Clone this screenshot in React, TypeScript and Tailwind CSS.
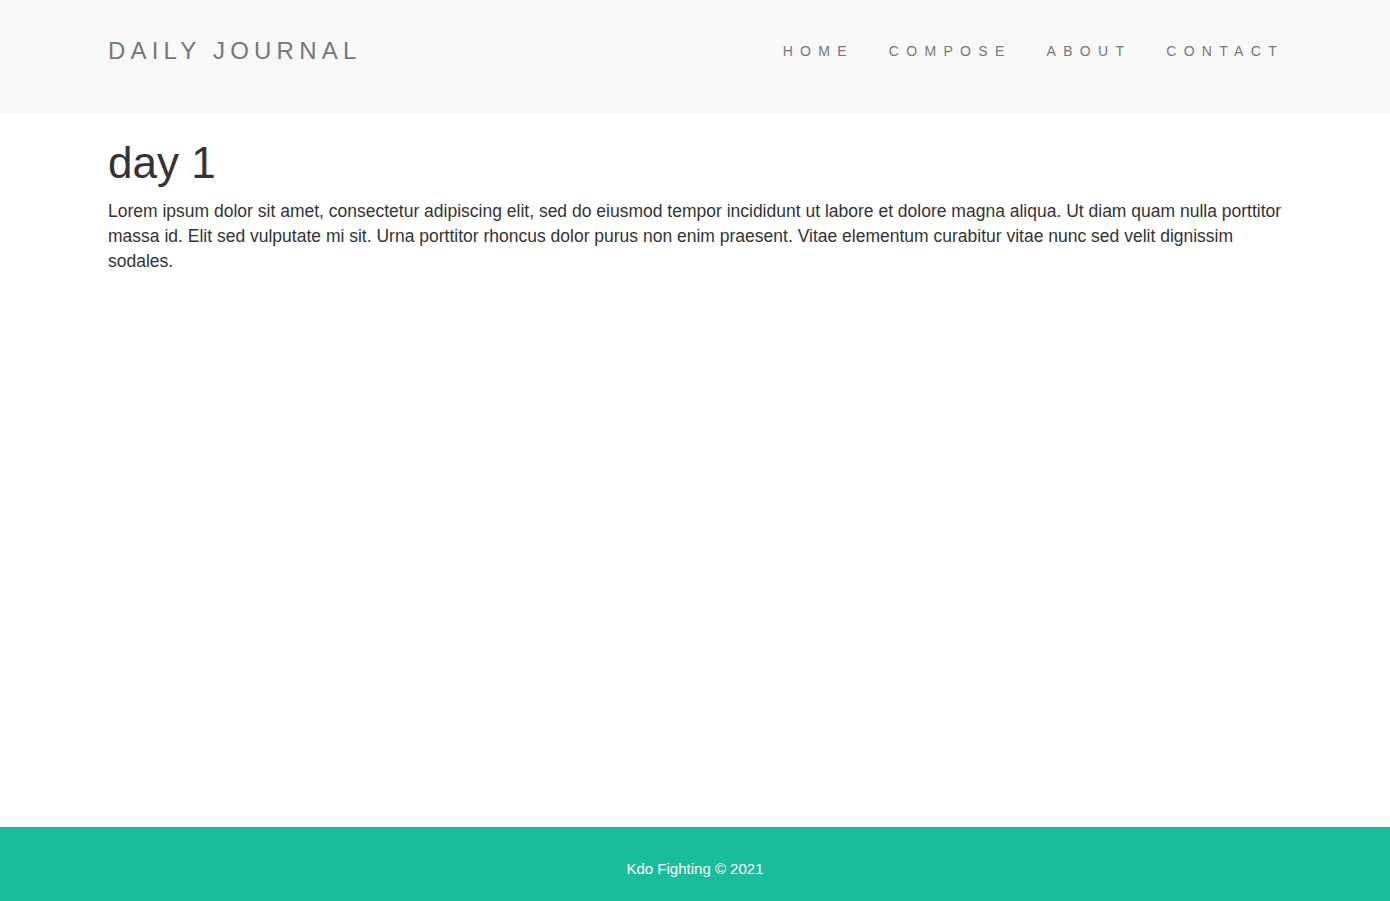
const navItems = ["HOME", "COMPOSE", "ABOUT", "CONTACT"];

const App = () => {
    return (
        <div
            className="min-h-screen flex flex-col bg-white"
            style={{ fontFamily: '"Liberation Sans", Arial, sans-serif' }}
        >
            <header className="h-[113px] bg-[#f8f8f8] flex items-center justify-between pl-[108px] pr-[106px] pb-[12px]">
                <div className="text-[24px] tracking-[5.2px] text-[#777] leading-none">
                    DAILY JOURNAL
                </div>
                <nav className="flex gap-[35px]">
                    {navItems.map((item) => (
                        <a
                            key={item}
                            href="#"
                            className="text-[14px] tracking-[7.3px] text-[#777] leading-none"
                        >
                            {item}
                        </a>
                    ))}
                </nav>
            </header>

            <main className="flex-1 px-[108px] pt-[26px]">
                <h1 className="text-[44px] leading-[1.1] text-[#333]">day 1</h1>
                <p className="mt-[12px] text-[17.5px] leading-[25px] text-[#333]">
                    Lorem ipsum dolor sit amet, consectetur adipiscing elit, sed do
                    eiusmod tempor incididunt ut labore et dolore magna aliqua. Ut diam
                    quam nulla porttitor massa id. Elit sed vulputate mi sit. Urna
                    porttitor rhoncus dolor purus non enim praesent. Vitae elementum
                    curabitur vitae nunc sed velit dignissim sodales.
                </p>
            </main>

            <footer className="h-[74px] bg-[#1abc9c] flex items-center justify-center pt-[10px]">
                <p className="text-[15px] text-white">Kdo Fighting © 2021</p>
            </footer>
        </div>
    );
};

export default App;
